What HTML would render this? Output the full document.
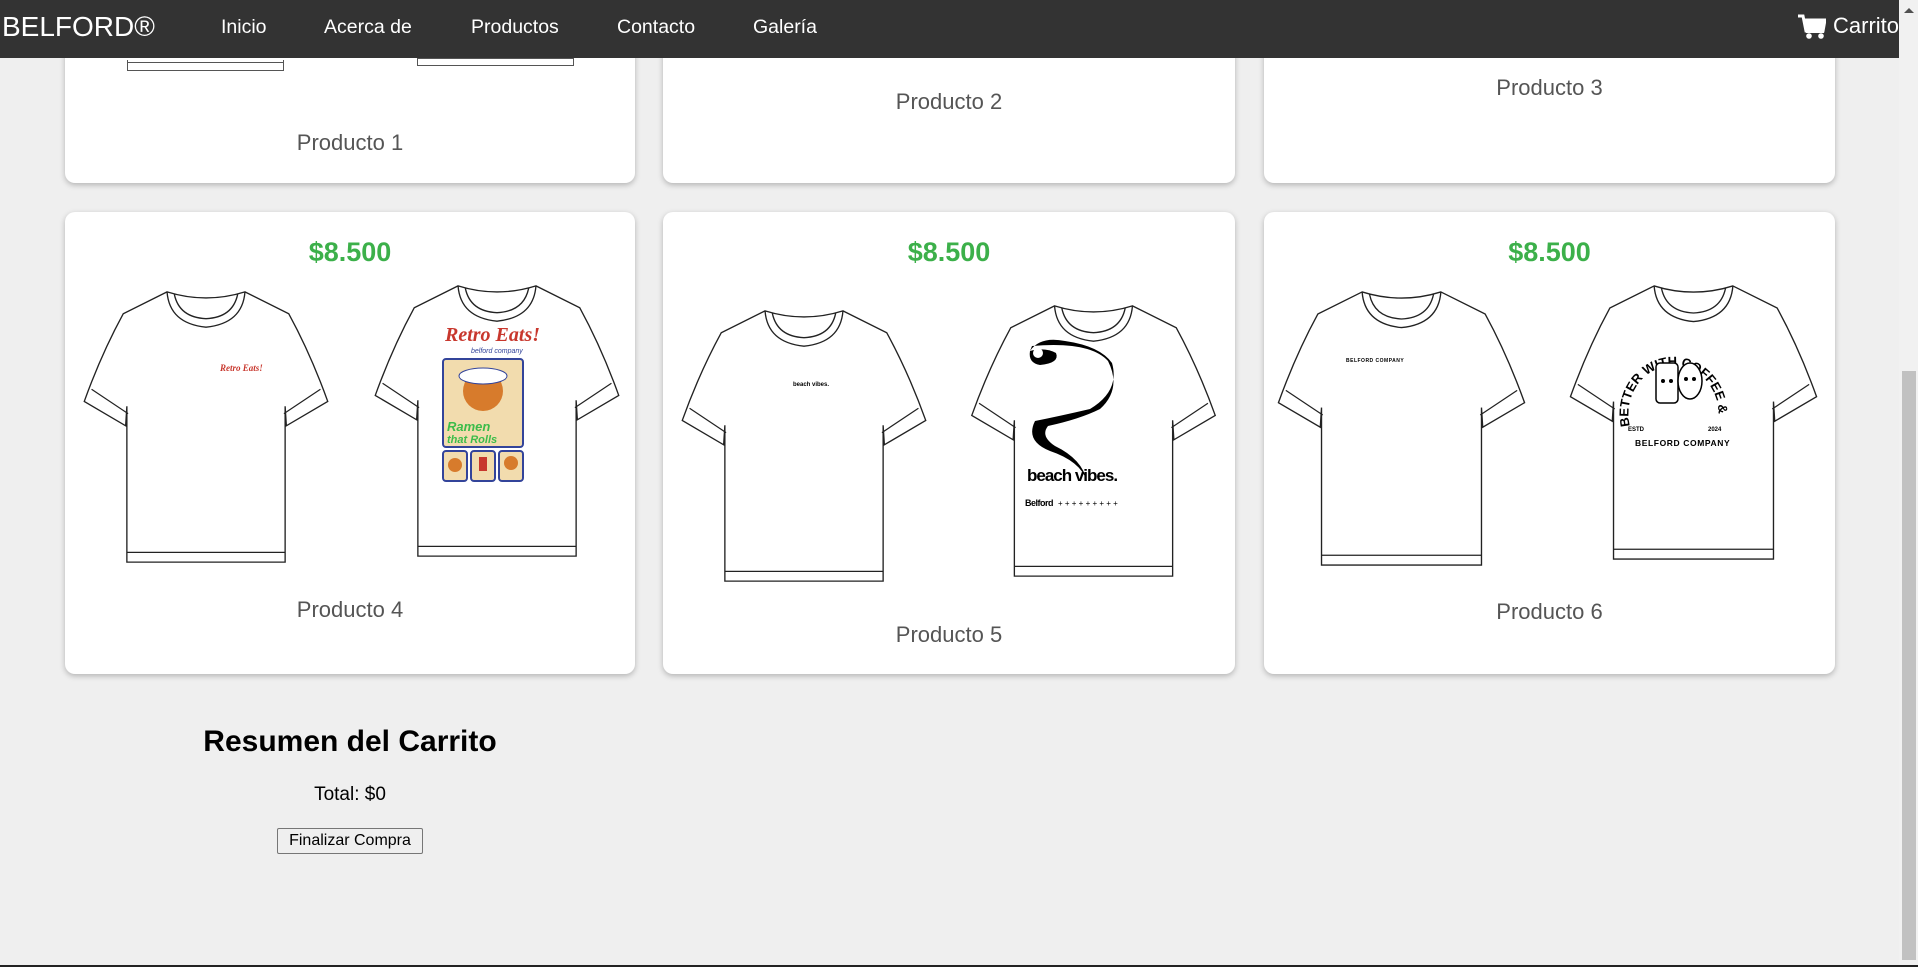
<!DOCTYPE html>
<html><head><meta charset="utf-8"><style>
*{margin:0;padding:0;box-sizing:border-box}
html,body{width:1918px;height:967px;overflow:hidden;background:#efefef;font-family:"Liberation Sans",Arial,sans-serif}
.abs{position:absolute}
nav{position:absolute;left:0;top:0;width:1899px;height:58px;background:#333;color:#fff;z-index:5;overflow:hidden}
nav span{position:absolute;top:0;line-height:54px;font-size:19.5px;color:#fff}
.card{position:absolute;background:#fff;border-radius:10px;box-shadow:0 2px 6px rgba(0,0,0,.25)}
.lbl{position:absolute;left:0;width:100%;text-align:center;font-size:22px;color:#555}
.price{position:absolute;left:0;width:100%;text-align:center;font-size:27px;font-weight:bold;color:#3cb04a;top:25px}
svg.shirt{position:absolute;overflow:visible}
</style></head><body>
<svg width="0" height="0" style="position:absolute">
<defs>
<symbol id="sh" viewBox="0 0 200 230">
<path d="M68,4 Q100,14 132,4 L168,22 Q186,55 200,94 L166,114 L165,98 L165,226 L35,226 L35,98 L34,114 L0,94 Q14,55 32,22 Z" fill="#fff" stroke="#222" stroke-width="1.1"/>
<path d="M68,4 Q70,30 100,33 Q130,30 132,4 M74,6 Q78,25 100,26 Q122,25 126,6" fill="none" stroke="#222" stroke-width="1.1"/>
<path d="M35,218 L165,218 M6,84 L36,104 M194,84 L164,104" fill="none" stroke="#222" stroke-width="1"/>
</symbol>
</defs></svg>

<nav>
<span style="left:2px;font-size:28px">BELFORD®</span>
<span style="left:221px">Inicio</span>
<span style="left:324px">Acerca de</span>
<span style="left:471px">Productos</span>
<span style="left:617px">Contacto</span>
<span style="left:753px">Galería</span>
<svg class="abs" style="left:1798px;top:14px" width="28" height="26" viewBox="0 0 28 26"><path d="M0,2 H5 L8,17 H25 L27,6 H7" fill="none" stroke="#fff" stroke-width="3"/><path d="M6,5 H28 L25.5,17 H8.5 Z" fill="#fff"/><rect x="8" y="16" width="18" height="3" fill="#fff"/><circle cx="11" cy="22" r="2.8" fill="#fff"/><circle cx="23" cy="22" r="2.8" fill="#fff"/></svg>
<span style="left:1833px;font-size:22px;line-height:52px">Carrito</span>
</nav>

<div class="card" style="left:65px;top:-20px;width:570px;height:203px">
 <div class="abs" style="left:62px;top:80px;width:157px;height:11px;border:1px solid #555;border-top:none"></div>
 <div class="abs" style="left:62px;top:82px;width:157px;height:1px;background:#555"></div>
 <div class="abs" style="left:352px;top:76px;width:157px;height:10px;border:1px solid #555;border-top:none"></div>
 <div class="abs" style="left:352px;top:78px;width:157px;height:1px;background:#555"></div>
 <div class="lbl" style="top:150px">Producto 1</div>
</div>
<div class="card" style="left:663px;top:-20px;width:572px;height:203px"><div class="lbl" style="top:109px">Producto 2</div></div>
<div class="card" style="left:1264px;top:-20px;width:571px;height:203px"><div class="lbl" style="top:95px">Producto 3</div></div>

<div class="card" style="left:65px;top:212px;width:570px;height:462px">
 <div class="price">$8.500</div>
 <svg class="shirt" style="left:17px;top:75px" width="248" height="280"><use href="#sh"/><text x="138" y="84" font-size="9" fill="#c8372d" font-style="italic" font-weight="bold" font-family="Liberation Serif">Retro Eats!</text></svg>
 <svg class="shirt" style="left:308px;top:69px" width="248" height="280"><use href="#sh"/>
  <text x="72" y="60" font-size="20" fill="#c8372d" font-style="italic" font-weight="bold" font-family="Liberation Serif">Retro Eats!</text>
  <text x="98" y="72" font-size="7" fill="#33449a" font-style="italic">belford company</text>
  <rect x="70" y="78" width="80" height="88" rx="3" fill="#f2dcae" stroke="#33449a" stroke-width="2"/>
  <circle cx="110" cy="110" r="20" fill="#d77b2c"/><ellipse cx="110" cy="95" rx="24" ry="8" fill="#fff" stroke="#33449a"/>
  <text x="74" y="150" font-size="13" fill="#3cbc4a" font-weight="bold" font-style="italic">Ramen</text>
  <text x="74" y="162" font-size="11" fill="#3cbc4a" font-weight="bold" font-style="italic">that Rolls</text>
  <rect x="70" y="170" width="24" height="30" rx="3" fill="#f2dcae" stroke="#33449a" stroke-width="2"/>
  <rect x="98" y="170" width="24" height="30" rx="3" fill="#f2dcae" stroke="#33449a" stroke-width="2"/>
  <rect x="126" y="170" width="24" height="30" rx="3" fill="#f2dcae" stroke="#33449a" stroke-width="2"/>
  <circle cx="82" cy="184" r="7" fill="#d77b2c"/><rect x="106" y="176" width="8" height="14" fill="#c8372d"/><circle cx="138" cy="182" r="7" fill="#d77b2c"/>
 </svg>
 <div class="lbl" style="top:385px">Producto 4</div>
</div>

<div class="card" style="left:663px;top:212px;width:572px;height:462px">
 <div class="price">$8.500</div>
 <svg class="shirt" style="left:18px;top:94px" width="246" height="280"><use href="#sh"/><text x="112" y="80" font-size="6" font-weight="bold">beach vibes.</text></svg>
 <svg class="shirt" style="left:307px;top:89px" width="247" height="280"><use href="#sh"/>
  <path d="M60,50 Q70,35 95,40 Q130,45 142,62 Q150,90 120,108 Q90,115 65,120 Q55,140 80,150 Q110,160 117,180 Q112,158 85,145 Q70,135 78,125 Q110,118 130,108 Q152,88 138,60 Q120,40 62,45 Z" fill="#000"/>
  <path d="M60,50 Q58,62 70,64 Q90,62 86,52 Q75,46 60,50 Z" fill="#000"/>
  <circle cx="68" cy="52" r="5" fill="#fff"/>
  <text x="57" y="180" font-size="17" font-weight="bold" letter-spacing="-1">beach vibes.</text>
  <text x="55" y="205" font-size="9" font-weight="bold" letter-spacing="-.5">Belford</text>
  <text x="88" y="205" font-size="8">+ + + + + + + + +</text>
 </svg>
 <div class="lbl" style="top:410px">Producto 5</div>
</div>

<div class="card" style="left:1264px;top:212px;width:571px;height:462px">
 <div class="price">$8.500</div>
 <svg class="shirt" style="left:12px;top:75px" width="251" height="283"><use href="#sh"/><text x="70" y="75" font-size="5" font-weight="bold" letter-spacing=".5">BELFORD COMPANY</text></svg>
 <svg class="shirt" style="left:304px;top:69px" width="251" height="283"><use href="#sh"/>
  <defs><path id="arc" d="M62,145 A45,48 0 1 1 150,140"/></defs>
  <text font-size="13" font-weight="bold"><textPath href="#arc">BETTER WITH COFFEE &amp; CO</textPath></text>
  <rect x="88" y="82" width="22" height="40" rx="4" fill="#fff" stroke="#000" stroke-width="1.5"/>
  <ellipse cx="122" cy="100" rx="12" ry="18" fill="#fff" stroke="#000" stroke-width="1.5"/>
  <circle cx="95" cy="100" r="2" /><circle cx="103" cy="100" r="2"/><circle cx="118" cy="98" r="2"/><circle cx="126" cy="98" r="2"/>
  <text x="60" y="150" font-size="6" font-weight="bold">ESTD</text><text x="140" y="150" font-size="6" font-weight="bold">2024</text>
  <text x="67" y="165" font-size="8.5" font-weight="bold" letter-spacing=".6">BELFORD COMPANY</text>
 </svg>
 <div class="lbl" style="top:387px">Producto 6</div>
</div>

<div class="abs" style="left:150px;top:725px;width:400px;text-align:center;font-size:30px;font-weight:bold;color:#000">Resumen del Carrito</div>
<div class="abs" style="left:150px;top:784px;width:400px;text-align:center;font-size:19px;color:#000">Total: $0</div>
<div class="abs" style="left:277px;top:828px;width:146px;height:26px;border:1px solid #767676;border-radius:2px;background:#efefef;font-size:16px;text-align:center;line-height:24px;color:#000">Finalizar Compra</div>

<div class="abs" style="left:0;top:965px;width:1918px;height:2px;background:#222"></div>
<div class="abs" style="left:1899px;top:0;width:19px;height:965px;background:#f1f1f1"></div>
<div class="abs" style="left:1904px;top:8px;width:0;height:0;border-left:5px solid transparent;border-right:5px solid transparent;border-bottom:5px solid #505050"></div>
<div class="abs" style="left:1902px;top:371px;width:14px;height:589px;background:#c1c1c1"></div>
</body></html>
